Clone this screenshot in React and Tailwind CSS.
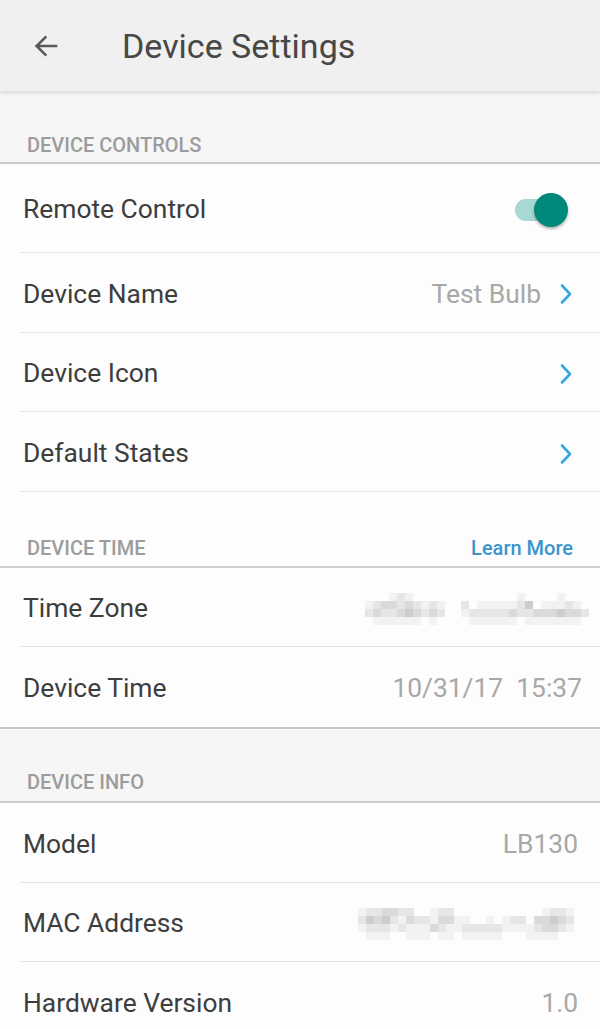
import React from "react";

const font = { fontFamily: "Roboto, 'Noto Sans', sans-serif" };

function Chevron() {
  return (
    <svg width="16" height="22" viewBox="0 0 16 22" className="ml-[17px] mr-[4px]">
      <path d="M4 2.5 L12 11 L4 19.5" fill="none" stroke="#3aa6df" strokeWidth="2.6" strokeLinecap="round" strokeLinejoin="round" />
    </svg>
  );
}

function Toggle() {
  return (
    <div className="relative w-[56px] h-[36px] mr-[10px]">
      <div className="absolute left-[3px] top-[7px] w-[44px] h-[22px] rounded-full bg-[#a8d8d3]" />
      <div className="absolute right-[0px] top-[1px] w-[34px] h-[34px] rounded-full bg-[#00897b] shadow-[0_2px_3px_rgba(0,0,0,0.3)]" />
    </div>
  );
}

const shades = ["transparent", "#f2f2f2", "#e6e6e6", "#dadada", "#cdcdcd"];

// pixel mosaic covering a private value
function Mosaic({ rows }) {
  return (
    <div className="flex flex-col">
      {rows.map((r, i) => (
        <div key={i} className="flex">
          {r.split("").map((c, j) => (
            <span key={j} className="inline-block w-[8px] h-[8px]" style={{ background: shades[+c] }} />
          ))}
        </div>
      ))}
    </div>
  );
}

function Row({ label, children, h = "h-[80px]", divider = true }) {
  return (
    <div className={`flex items-center ${h} pl-[23px] pr-[22px] pt-[3px] relative`}>
      <span className="text-[26.4px] text-[#3d3d3d]">{label}</span>
      <div className="ml-auto flex items-center">{children}</div>
      {divider && <div className="absolute left-[20px] right-0 bottom-0 h-px bg-[#e2e4e2]" />}
    </div>
  );
}

const Value = ({ children }) => (
  <span className="text-[26.4px] text-[#a8a8a8]">{children}</span>
);

const tzRows = [
  "0001210000000000000100001000",
  "1233232121002011111240111210",
  "2322343232001222223223334332",
  "0111111010000111111011111110",
];
const macRows = [
  "1223322001220000000000012210",
  "2434213221331100101220334320",
  "1222121113211222221111233210",
  "0111001110110111110001111000",
];

export default function App() {
  return (
    <div className="w-[600px] h-[1029px] overflow-hidden bg-[#fcfdfc]" style={font}>
      {/* top bar */}
      <div className="relative z-10 h-[91px] bg-[#eff0ef] flex items-center shadow-[0_2px_4px_rgba(0,0,0,0.12)]">
        <svg width="30" height="30" viewBox="0 0 24 24" className="ml-[31px]">
          <path d="M20 12H4.5M11.5 5L4.5 12L11.5 19" fill="none" stroke="#5a5a5a" strokeWidth="2" strokeLinecap="square" />
        </svg>
        <span className="ml-[61px] pt-[2px] text-[34px] text-[#474747]">Device Settings</span>
      </div>

      {/* device controls */}
      <div className="h-[73px] bg-[#f5f6f5] flex items-end pl-[27px] pb-[2px] border-b-2 border-[#c9cac9]">
        <span className="text-[20px] font-medium text-[#9c9c9c]">DEVICE CONTROLS</span>
      </div>
      <Row label="Remote Control" h="h-[89px]">
        <Toggle />
      </Row>
      <Row label="Device Name">
        <Value>Test Bulb</Value>
        <Chevron />
      </Row>
      <Row label="Device Icon" h="h-[79px]">
        <Chevron />
      </Row>
      <Row label="Default States">
        <Chevron />
      </Row>

      {/* device time */}
      <div className="h-[76px] flex items-end pl-[27px] pr-[27px] pb-[3px] border-b-2 border-[#cfd0cf]">
        <span className="text-[20px] font-medium text-[#9c9c9c]">DEVICE TIME</span>
        <span className="ml-auto text-[20px] font-medium text-[#3b95cc]">Learn More</span>
      </div>
      <Row label="Time Zone" h="h-[79px]">
        <div className="mr-[-11px]">
          <Mosaic rows={tzRows} />
        </div>
      </Row>
      <Row label="Device Time" divider={false}>
        <span className="text-[26.4px] text-[#a8a8a8] mr-[-4px]">10/31/17&nbsp;&nbsp;15:37</span>
      </Row>

      {/* device info */}
      <div className="h-[76px] bg-[#f5f6f5] flex items-end pl-[27px] pb-[4px] border-y-2 border-t-[#c6c7c6] border-b-[#c9cac9]">
        <span className="text-[20px] font-medium text-[#9c9c9c]">DEVICE INFO</span>
      </div>
      <Row label="Model">
        <Value>LB130</Value>
      </Row>
      <Row label="MAC Address" h="h-[79px]">
        <div className="mr-[-4px]">
          <Mosaic rows={macRows} />
        </div>
      </Row>
      <Row label="Hardware Version" divider={false}>
        <Value>1.0</Value>
      </Row>
    </div>
  );
}
